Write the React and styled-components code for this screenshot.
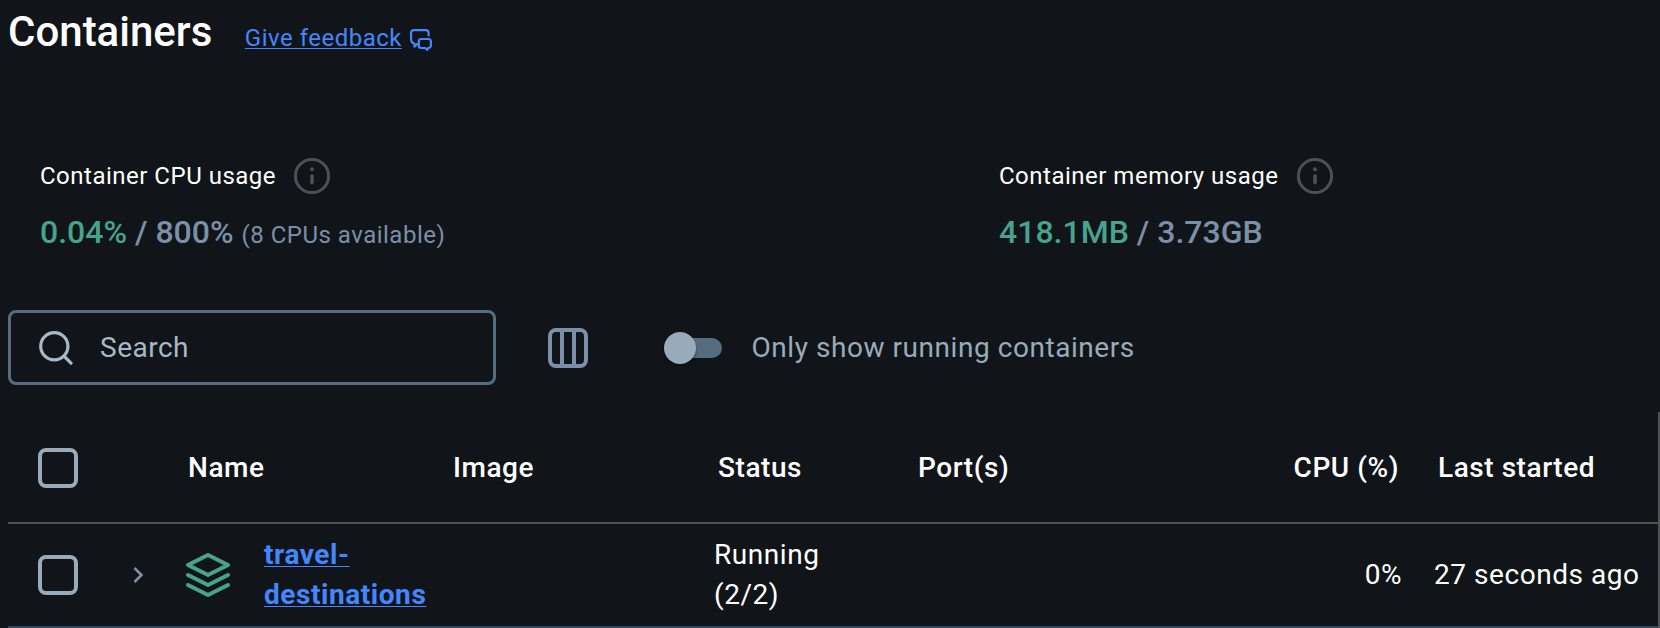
import React from "react";
import styled, { createGlobalStyle } from "styled-components";

const c = {
  bg: "#111519",
  text: "#ffffff",
  link: "#4287ff",
  green: "#48a38d",
  slate: "#7b90a8",
  muted: "#99abbb",
  placeholder: "#a7b8c6",
  steel: "#566c81",
  grey: "#4e5153",
  divider: "#525252",
  rowDivider: "#35475a",
};

const GlobalStyle = createGlobalStyle`
  *, *::before, *::after { box-sizing: border-box; }
  body {
    margin: 0;
    background: ${c.bg};
    color: ${c.text};
    font-family: Roboto, "Liberation Sans", sans-serif;
    overflow: hidden;
  }
  svg { display: block; flex: none; }
`;

const Page = styled.main`
  height: 628px;
  padding-left: 8px;
  display: flex;
  flex-direction: column;
`;

const Header = styled.header`
  display: flex;
  align-items: baseline;
  height: 64px;
  gap: 32.5px;
`;

const Title = styled.h1`
  margin: 0;
  font-size: 42px;
  font-weight: 500;
  line-height: 64px;
  letter-spacing: 0;
`;

const FeedbackLink = styled.a`
  display: flex;
  align-items: center;
  gap: 8.5px;
  color: ${c.link};
  font-size: 24px;
  line-height: 36px;
  letter-spacing: 0.5px;
  cursor: pointer;

  span {
    text-decoration: underline;
    text-decoration-thickness: 1px;
    text-underline-offset: 2px;
  }
  svg { margin-top: 4px; }
`;

const Usage = styled.section`
  display: grid;
  grid-template-columns: 959px 1fr;
  padding: 92px 0 0 32px;
  height: 246px;
`;

const UsageLabel = styled.div`
  display: flex;
  align-items: center;
  gap: 17.2px;
  height: 40px;
  font-size: 24px;
  letter-spacing: 0.5px;
`;

const UsageValue = styled.div`
  margin-top: 14px;
  color: ${c.slate};
  font-size: 32px;
  font-weight: 500;
  line-height: 44px;
  white-space: pre;

  strong { color: ${c.green}; font-weight: 500; }
  small { font-size: 24px; font-weight: 400; letter-spacing: 0.5px; }
`;

const Toolbar = styled.div`
  display: flex;
  align-items: center;
  height: 75px;
`;

const SearchBox = styled.div`
  display: flex;
  align-items: center;
  gap: 27px;
  width: 488px;
  height: 75px;
  padding-left: 28px;
  border: 3px solid ${c.steel};
  border-radius: 8px;
  color: ${c.placeholder};
  font-size: 28px;
  letter-spacing: 0.5px;
`;

const ColumnsButton = styled.div`
  margin-left: 52px;
`;

const Switch = styled.div`
  display: flex;
  align-items: center;
  width: 56px;
  height: 20px;
  margin-left: 78px;
  border-radius: 10px;
  background: ${c.steel};
`;

const Thumb = styled.div`
  flex: none;
  width: 32px;
  height: 32px;
  margin-left: -2px;
  border-radius: 50%;
  background: ${c.muted};
  box-shadow: 0 2px 3px rgba(0, 0, 0, 0.35);
`;

const SwitchLabel = styled.span`
  margin-left: 29.5px;
  color: ${c.muted};
  font-size: 28px;
  letter-spacing: 0.55px;
`;

const Table = styled.div`
  margin-top: 27px;
  height: 216px;
  border-right: 2px solid ${c.divider};
`;

const Row = styled.div`
  display: grid;
  grid-template-columns: 100px 76px 265px 265px 200px 376px 112px 1fr;
  align-items: center;
  height: ${(p) => (p.$head ? 112 : 104)}px;
  padding-top: ${(p) => (p.$head ? 2 : 0)}px;
  border-bottom: 2px solid ${(p) => (p.$head ? c.divider : c.rowDivider)};
  font-size: 28px;
  font-weight: ${(p) => (p.$head ? 500 : 400)};
  line-height: 40px;
  letter-spacing: 0.55px;
`;

const Cell = styled.div`
  padding-left: ${(p) => (p.$head && !p.$right ? 4 : 0)}px;
  padding-right: ${(p) => (p.$head ? 3 : 0)}px;
  text-align: ${(p) => (p.$right ? "right" : "left")};
  white-space: nowrap;
`;

const LastCell = styled(Cell)`
  padding-left: ${(p) => (p.$head ? 36 : 32)}px;
`;

const Checkbox = styled.div`
  width: 40px;
  height: 40px;
  margin-left: 30px;
  border: 4px solid ${c.muted};
  border-radius: 8px;
`;

const Expand = styled.div`
  padding-left: 25px;
`;

const NameCell = styled.div`
  display: flex;
  align-items: center;
  gap: 32px;
`;

const NameLink = styled.a`
  color: ${c.link};
  font-weight: 700;
  letter-spacing: 0.56px;
  text-decoration: underline;
  text-decoration-thickness: 1px;
  text-underline-offset: 2px;
  cursor: pointer;
`;

const FeedbackIcon = () => (
  <svg width="22" height="22" viewBox="0 0 22 22" fill="none" stroke={c.link} strokeWidth="2.2" strokeLinejoin="round" strokeLinecap="round">
    <path d="M18.6 6.5V3.7A2.6 2.6 0 0 0 16 1.1H3.7A2.6 2.6 0 0 0 1.1 3.7v7.1a4 4 0 0 0 3.3 3.8V17.6L7.2 15" />
    <path d="M11.2 10h7.3A2.4 2.4 0 0 1 20.9 12.4v4.2a2.4 2.4 0 0 1-2.4 2.4h-.4L17.4 20.9l-2.2-1.9h-4a2.4 2.4 0 0 1-2.4-2.4v-4.2A2.4 2.4 0 0 1 11.2 10z" />
  </svg>
);

const InfoIcon = () => (
  <svg width="38" height="38" viewBox="0 0 38 38" fill="none" stroke={c.grey}>
    <circle cx="19" cy="19" r="16.6" strokeWidth="3" />
    <circle cx="19" cy="12.3" r="2" fill={c.grey} stroke="none" />
    <path d="M19 19v6.6" strokeWidth="3.6" strokeLinecap="round" />
  </svg>
);

const SearchIcon = () => (
  <svg width="34" height="34" viewBox="0 0 34 34" fill="none" stroke={c.placeholder} strokeWidth="3.2" strokeLinecap="round">
    <circle cx="15.3" cy="15.3" r="13.6" />
    <path d="M25 25.2l7 7" />
  </svg>
);

const ColumnsIcon = () => (
  <svg width="40" height="40" viewBox="0 0 40 40" fill="none" stroke={c.slate} strokeWidth="4">
    <rect x="2" y="2" width="36" height="36" rx="6" />
    <path d="M14 2v36M26 2v36" />
  </svg>
);

const ChevronIcon = () => (
  <svg width="11" height="18" viewBox="0 0 11 18" fill="none" stroke={c.slate} strokeWidth="2.6">
    <path d="M1.5 2l7 7-7 7" />
  </svg>
);

const StackIcon = () => (
  <svg width="48" height="48" viewBox="0 0 48 48" fill="none" stroke={c.green} strokeWidth="4" strokeLinejoin="round" strokeLinecap="round">
    <path d="M24 4L44 14 24 24 4 14z" />
    <path d="M4 24l20 10 20-10M4 34l20 10 20-10" />
  </svg>
);

export default function App() {
  return (
    <Page>
      <GlobalStyle />
      <Header>
        <Title>Containers</Title>
        <FeedbackLink>
          <span>Give feedback</span>
          <FeedbackIcon />
        </FeedbackLink>
      </Header>
      <Usage>
        <div>
          <UsageLabel>Container CPU usage <InfoIcon /></UsageLabel>
          <UsageValue><strong>0.04%</strong> / 800% <small>(8 CPUs available)</small></UsageValue>
        </div>
        <div>
          <UsageLabel>Container memory usage <InfoIcon /></UsageLabel>
          <UsageValue><strong>418.1MB</strong> / 3.73GB</UsageValue>
        </div>
      </Usage>
      <Toolbar>
        <SearchBox><SearchIcon />Search</SearchBox>
        <ColumnsButton><ColumnsIcon /></ColumnsButton>
        <Switch><Thumb /></Switch>
        <SwitchLabel>Only show running containers</SwitchLabel>
      </Toolbar>
      <Table>
        <Row $head>
          <Checkbox />
          <span />
          <Cell $head>Name</Cell>
          <Cell $head>Image</Cell>
          <Cell $head>Status</Cell>
          <Cell $head>Port(s)</Cell>
          <Cell $head $right>CPU (%)</Cell>
          <LastCell $head>Last started</LastCell>
        </Row>
        <Row>
          <Checkbox />
          <Expand><ChevronIcon /></Expand>
          <NameCell>
            <StackIcon />
            <NameLink>travel-<br />destinations</NameLink>
          </NameCell>
          <span />
          <Cell>Running<br />(2/2)</Cell>
          <span />
          <Cell $right>0%</Cell>
          <LastCell>27 seconds ago</LastCell>
        </Row>
      </Table>
    </Page>
  );
}
